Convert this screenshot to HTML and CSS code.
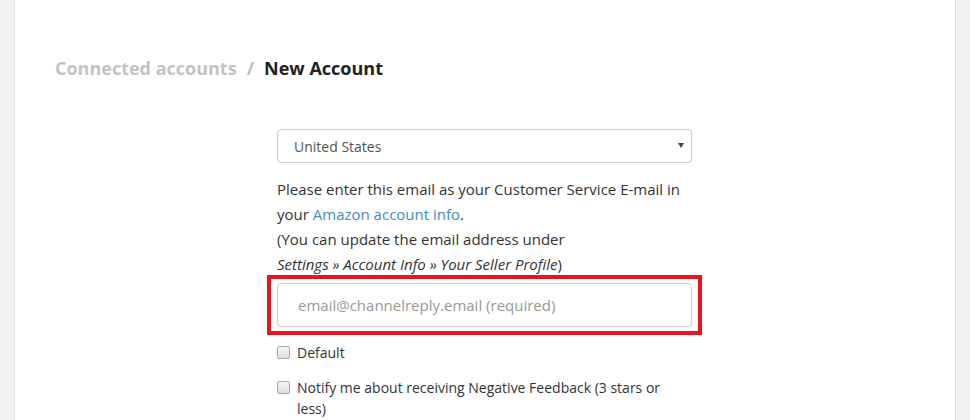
FILE: index.html
```html
<!DOCTYPE html>
<html lang="en">
<head>
<meta charset="utf-8">
<title>New Account</title>
<link rel="stylesheet" href="styles.css">
</head>
<body>
<div class="panel">
  <h1 class="crumb"><span class="crumb-link">Connected accounts</span><span class="crumb-sep">/</span><span class="crumb-current">New Account</span></h1>
  <form class="form">
    <div class="select-wrap">
      <select class="select">
        <option>United States</option>
      </select>
    </div>
    <p class="help">Please enter this email as your Customer Service E-mail in your <a href="#" class="link">Amazon account info</a>.<br>(You can update the email address under<br><em>Settings » Account Info » Your Seller Profile</em>)</p>
    <div class="highlight">
      <input class="input" type="text" placeholder="email@channelreply.email (required)">
    </div>
    <label class="check"><input type="checkbox" class="box"><span>Default</span></label>
    <label class="check check-second"><input type="checkbox" class="box"><span>Notify me about receiving Negative Feedback (3 stars or less)</span></label>
  </form>
</div>
</body>
</html>
```
FILE: styles.css
```css
html, body {
  margin: 0;
  padding: 0;
}
body {
  background: #f2f2f2;
  font-family: "Open Sans", "DejaVu Sans", sans-serif;
  color: #333;
  overflow: hidden;
}
.panel {
  margin-left: 14px;
  width: 942px;
  box-sizing: border-box;
  min-height: 420px;
  background: #fff;
  border-left: 1px solid #e4e4e4;
  border-right: 1px solid #dadada;
  padding: 56px 41px 0 40px;
}
.crumb {
  margin: 0;
  font-size: 18px;
  line-height: 24px;
  font-weight: 700;
}
.crumb-link {
  color: #c3c3c3;
}
.crumb-sep {
  color: #bdbdbd;
  margin: 0 10px 0 10px;
}
.crumb-current {
  color: #222;
}
.form {
  width: 415px;
  margin: 49px auto 0;
}
.select-wrap {
  position: relative;
}
.select-wrap::after {
  content: "";
  position: absolute;
  right: 8px;
  top: 14px;
  border-left: 3.5px solid transparent;
  border-right: 3.5px solid transparent;
  border-top: 5px solid #444;
}
.select {
  display: block;
  width: 100%;
  height: 34px;
  box-sizing: border-box;
  appearance: none;
  -webkit-appearance: none;
  background: #fff;
  border: 1px solid #ccc;
  border-radius: 4px;
  padding: 0 16px;
  font-family: "Open Sans", sans-serif;
  font-size: 14px;
  color: #555;
}
.help {
  margin: 14px 0 0;
  font-size: 15px;
  line-height: 25px;
  color: #333;
}
.link {
  color: #428bca;
  text-decoration: none;
}
.highlight {
  margin: -2px -10px 0;
  border: 4px solid #e8131f;
  padding: 4px 6px;
}
.input {
  display: block;
  width: 100%;
  height: 44px;
  box-sizing: border-box;
  border: 1px solid #ccc;
  border-radius: 4px;
  padding: 0 20px;
  font-family: "Open Sans", sans-serif;
  font-size: 15px;
  color: #555;
}
.input::placeholder {
  color: #999;
}
.check {
  display: flex;
  align-items: flex-start;
  gap: 7px;
  margin-top: 7px;
  font-size: 14px;
  line-height: 21px;
  color: #333;
}
.check-second {
  margin-top: 14px;
}
.box {
  appearance: none;
  -webkit-appearance: none;
  flex: none;
  width: 13px;
  height: 13px;
  margin: 4px 0 0;
  box-sizing: border-box;
  border: 1px solid #a9a9a9;
  border-radius: 2px;
  background: linear-gradient(#f6f6f6, #dedede);
}
```
